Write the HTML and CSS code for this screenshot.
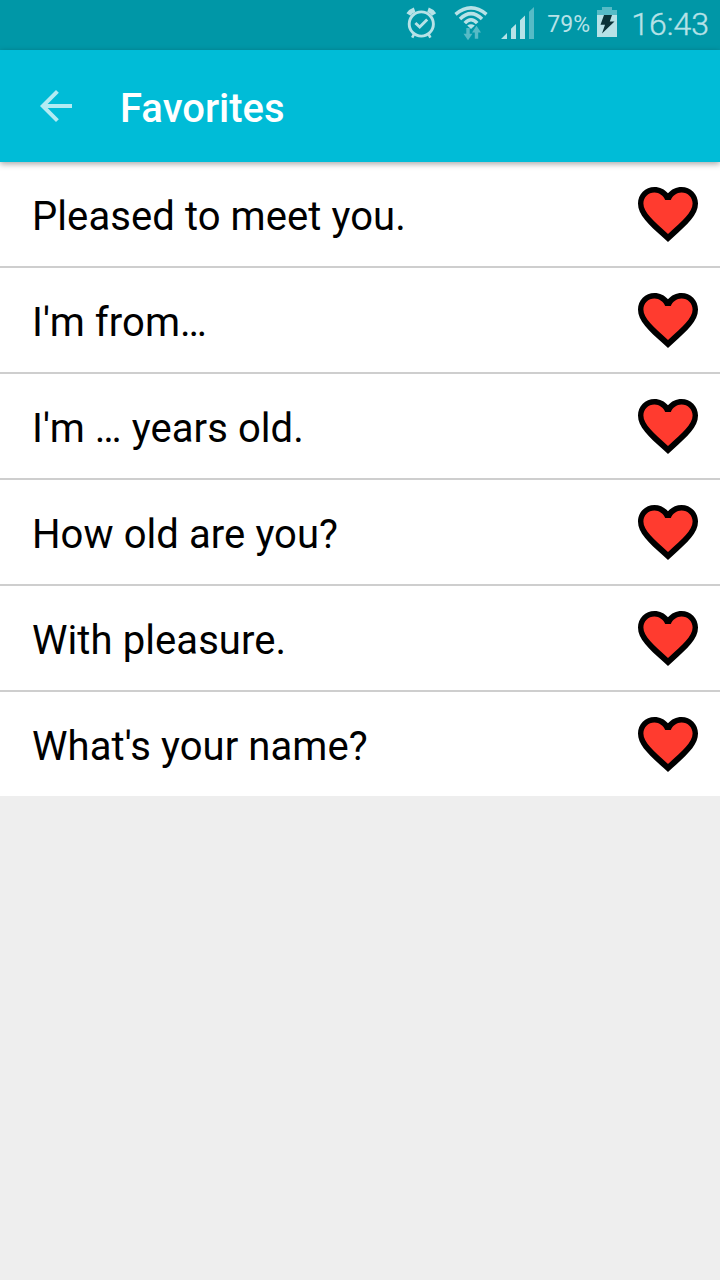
FILE: index.html
```html
<!DOCTYPE html>
<html lang="en">
<head>
    <meta charset="UTF-8">
    <meta name="viewport" content="width=device-width, initial-scale=1.0">
    <title>Favorites</title>
    <link rel="stylesheet" href="styles.css">
</head>
<body>
    <svg class="symbols" width="0" height="0">
        <symbol id="heart" viewBox="0 0 24 24">
            <path fill="#000" d="M16.5 3c-1.74 0-3.41.81-4.5 2.09C10.91 3.81 9.24 3 7.5 3 4.42 3 2 5.42 2 8.5c0 3.78 3.4 6.86 8.55 11.54L12 21.35l1.45-1.32C18.6 15.36 22 12.28 22 8.5 22 5.42 19.58 3 16.5 3z"/>
            <path fill="#ff3b2f" d="M12.1 18.55l-.1.1-.1-.1C7.14 14.24 3.8 11.39 3.8 8.5 3.8 6.4 5.4 4.8 7.5 4.8c1.54 0 3.04 1.1 3.57 2.5h1.87C13.46 5.9 14.96 4.8 16.5 4.8c2.1 0 3.7 1.6 3.7 3.7 0 2.89-3.34 5.74-8.1 10.05z"/>
        </symbol>
    </svg>
    <div class="statusbar">
        <svg class="alarm" width="32" height="34" viewBox="0 0 32 34">
            <g fill="none" stroke="#b7e2e7">
                <circle cx="16.300" cy="17" r="12.1" stroke-width="2.9"/>
                <path d="M10.4 16l4.3 4 7.500-7.500" stroke-width="2.9"/>
                <path d="M3.500 7.500Q5.500 4.200 9.600 2.800M29.100 7.500Q27.100 4.200 23 2.800" stroke-width="4.8"/>
                <path d="M8.9 27.4l-1.7 3.2M23.7 27.4l1.7 3.2" stroke-width="2.6"/>
            </g>
        </svg>
        <svg class="wifi" width="34" height="36" viewBox="0 0 34 36">
            <g fill="none" stroke="#b7e2e7" stroke-width="3.5">
                <path d="M1.5 9.3Q17 -3.6 32.5 9.3"/>
                <path d="M6 14Q17 3.4 28 14"/>
                <path d="M10.8 18.2Q17 11.2 23.2 18.2"/>
            </g>
            <path fill="#b7e2e7" d="M13.2 20.6q3.8-2.6 7.6 0L17 24z"/>
            <path fill="#56bbc6" d="M12.3 23H15.7v5.7h2.8L14 35.3 9.5 28.7h2.8zM20.8 33.7h3.4V27.5h2.8L22.5 20.7 18 27.5h2.8z"/>
        </svg>
        <svg class="signal" width="34" height="34" viewBox="0 0 34 34">
            <path fill="#b7e2e7" d="M0 33l6-6v6zM10 33V22.8l5-4.8v15zM19 33V14.2l5-4.8V33z"/>
            <path fill="#56bbc6" d="M28 33V5.7L33 1v32z"/>
        </svg>
        <span class="percent">79%</span>
        <svg class="battery" width="20" height="31" viewBox="0 0 20 31">
            <path fill="#56bbc6" d="M0 4h5V1h10v3h5v6H0z"/>
            <path fill="#b7e2e7" d="M0 9h20v22H0z"/>
            <path fill="#0a3338" d="M7 9h8l-2.2 6.5h4.7L5 27.5l3-8.8H3.5z"/>
        </svg>
        <span class="clock">16:43</span>
    </div>
    <header class="toolbar">
        <svg class="back" width="48" height="48" viewBox="0 0 24 24">
            <path d="M20 11H7.83l5.59-5.59L12 4l-8 8 8 8 1.41-1.41L7.83 13H20v-2z"/>
        </svg>
        <h1>Favorites</h1>
    </header>
    <ul class="phrases">
        <li><span>Pleased to meet you.</span><svg class="heart"><use href="#heart"/></svg></li>
        <li><span>I'm from…</span><svg class="heart"><use href="#heart"/></svg></li>
        <li><span>I'm … years old.</span><svg class="heart"><use href="#heart"/></svg></li>
        <li><span>How old are you?</span><svg class="heart"><use href="#heart"/></svg></li>
        <li><span>With pleasure.</span><svg class="heart"><use href="#heart"/></svg></li>
        <li><span>What's your name?</span><svg class="heart"><use href="#heart"/></svg></li>
    </ul>
</body>
</html>
```
FILE: styles.css
```css
* {
    box-sizing: border-box;
}

body {
    margin: 0;
    min-height: 1280px;
    background-color: #eee;
    font-family: Roboto, "Liberation Sans", sans-serif;
}

.symbols {
    display: none;
}

.statusbar {
    display: flex;
    justify-content: flex-end;
    align-items: flex-start;
    height: 50px;
    padding-right: 11px;
    background-color: #0097a7;
    color: #b7e2e7;
}

.alarm {
    margin-top: 7px;
}

.wifi {
    margin-top: 5px;
    margin-left: 17px;
}

.signal {
    margin-top: 6px;
    margin-left: 13px;
}

.percent {
    width: 49px;
    margin-left: 12px;
    font-size: 23px;
    line-height: 28px;
    margin-top: 11px;
}

.battery {
    margin-top: 6px;
    margin-left: 1px;
}

.clock {
    margin-left: 14px;
    margin-top: 5px;
    font-size: 32px;
    line-height: 38px;
    font-weight: 300;
    -webkit-text-stroke: 0.4px #b7e2e7;
}

.toolbar {
    position: relative;
    display: flex;
    align-items: center;
    height: 112px;
    padding-left: 32px;
    background-color: #00bcd7;
    box-shadow: 0 2px 6px rgba(0, 0, 0, 0.35);
}

.back {
    fill: #fff;
    opacity: 0.7;
}

.toolbar h1 {
    margin: 0 0 0 40px;
    padding-top: 6px;
    color: #fff;
    font-size: 40px;
    line-height: 48px;
    font-weight: 500;
}

.phrases {
    margin: 0;
    padding: 0;
    list-style: none;
}

.phrases li {
    display: flex;
    justify-content: space-between;
    align-items: center;
    height: 106px;
    padding: 0 16px 0 32px;
    background-color: #fff;
    border-bottom: 2px solid #cecece;
    font-size: 40px;
    line-height: 48px;
    letter-spacing: 0.08px;
}

.phrases li:last-child {
    height: 104px;
    border-bottom: 0;
}

.phrases span {
    padding-top: 6px;
}

.heart {
    width: 72px;
    height: 72px;
}
```
